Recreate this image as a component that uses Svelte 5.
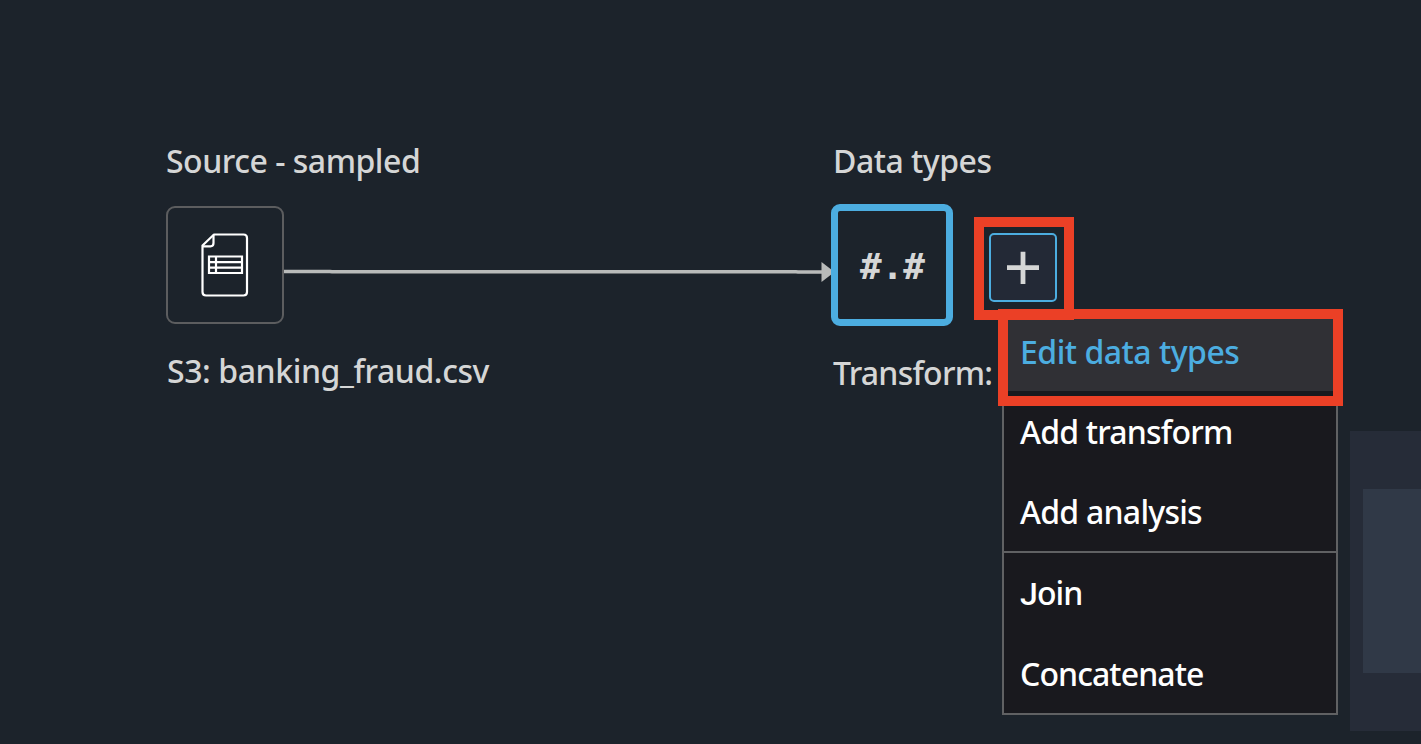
<script>
  const groups = [
    [
      { label: 'Edit data types', active: true, spacing: -0.5 },
      { label: 'Add transform', spacing: -0.8 },
      { label: 'Add analysis', spacing: -0.75 }
    ],
    [
      { label: 'Join', spacing: -0.9, flatJ: true },
      { label: 'Concatenate', spacing: -0.92 }
    ]
  ];
</script>

<main class="canvas">
  <aside class="minimap"><div class="viewport"></div></aside>

  <svg class="edge" width="560" height="30" viewBox="0 0 560 30" aria-hidden="true">
    <path d="M4 15.5H50L52 15.8H516L518 16H545" fill="none" stroke="#b9bbba" stroke-width="3.6" />
    <path d="M541.500 6L554.500 16L541.500 26Z" fill="#b9bbba" />
  </svg>

  <section class="node source">
    <h2><span class="t1">Source - sampled</span></h2>
    <div class="tile">
      <svg width="50" height="66" viewBox="0 0 50 66" fill="none" stroke="#fff" stroke-width="2.2" stroke-linejoin="round">
        <path d="M13 2.500H42.500Q46 2.500 46 6V60Q46 63.500 42.500 63.500H5Q1.500 63.500 1.500 60V13.500Z" />
        <path d="M12.500 2.800V11Q12.500 14.300 9.500 14.300H1.800" />
        <path d="M8 24.500H41V41H8ZM8 30.200H41M8 35.700H41M15 24.500V41" stroke-linejoin="miter" />
      </svg>
    </div>
    <p><span class="t2">S3: banking_fraud.csv</span></p>
  </section>

  <section class="node types">
    <h2><span class="t3">Data types</span></h2>
    <div class="tile selected"><span class="code">#.#</span></div>
    <p><span class="t4">Transform:</span></p>
  </section>

  <button class="add" aria-label="+">
    <svg width="34" height="34" viewBox="0 0 34 34"><path d="M17 0.700V33M1 16.700H33" stroke="#d5d6d6" stroke-width="4.800" /></svg>
  </button>

  <nav class="menu">
    {#each groups as group}
      <div class="group">
        {#each group as item}
          <div class="item" class:active={item.active}>
            <span class="label" class:flat-j={item.flatJ} style="letter-spacing: {item.spacing}px">{item.label}</span>
          </div>
        {/each}
      </div>
    {/each}
  </nav>

  <div class="mark mark-add"></div>
  <div class="mark mark-edit"></div>
</main>

<style>
  :global(body) { margin: 0; background: #1c232b; }
  .canvas {
    position: relative;
    width: 1421px;
    height: 744px;
    overflow: hidden;
    background: #1c232b;
    color: #d5d6d6;
    font: 500 32px/40px "Noto Sans", "Open Sans", sans-serif;
    white-space: nowrap;
  }
  .minimap {
    position: absolute;
    left: 1350px;
    top: 431px;
    width: 71px;
    height: 300px;
    box-sizing: border-box;
    padding: 58px 0 58px 12.5px;
    background: #262c38;
  }
  .viewport { height: 184px; background: #303947; }
  .edge { position: absolute; left: 280px; top: 256px; }
  .node { position: absolute; display: flex; flex-direction: column; align-items: flex-start; }
  .source { left: 166px; top: 142px; }
  .types { left: 831px; top: 142px; }
  h2, p { margin: 0; font: inherit; }
  h2 { height: 40px; margin-top: -1px; margin-bottom: 1px; }
  p { margin-top: -1px; }
  .types h2, .types p { padding-left: 2px; }
  .t1 { letter-spacing: -0.48px; }
  .t2 { letter-spacing: -0.42px; padding-left: 1px; }
  .t3 { letter-spacing: -0.5px; }
  .t4 { letter-spacing: -0.75px; }
  .tile {
    box-sizing: border-box;
    width: 118px;
    height: 118px;
    margin: 24px 0 28px;
    border: 2px solid #5c5d5f;
    border-radius: 9px;
    display: flex;
    align-items: center;
    justify-content: center;
    background: #1c232b;
  }
  .tile svg { margin-left: 2px; }
  .selected {
    width: 122px;
    height: 122px;
    margin: 22px 0 28px;
    border: 7px solid #4cade0;
    border-radius: 9px;
  }
  .code { font: 700 36px/40px "DejaVu Sans Mono", monospace; padding: 4px 0 0 1px; }
  .add {
    position: absolute;
    left: 989px;
    top: 233px;
    box-sizing: border-box;
    width: 68px;
    height: 69px;
    padding: 0;
    border: 2px solid #4cade0;
    border-radius: 5px;
    background: #232936;
    display: flex;
    align-items: center;
    justify-content: center;
  }
  .menu {
    position: absolute;
    left: 1002px;
    top: 309px;
    box-sizing: border-box;
    width: 336px;
    border: 2px solid #606163;
    background: #19191e;
    color: #fff;
  }
  .group + .group { border-top: 2px solid #606163; }
  .item { height: 80px; box-sizing: border-box; padding: 1px 0 0 16px; display: flex; align-items: center; }
  .active { background: #303035; color: #4cade0; }
  .label { display: inline-block; }
  .flat-j::first-letter { font-family: Roboto, "Liberation Sans", sans-serif; }
  .mark { position: absolute; box-sizing: border-box; border: 10px solid #eb4026; }
  .mark-add { left: 974px; top: 217px; width: 100px; height: 103px; }
  .mark-edit { left: 998px; top: 309px; width: 345px; height: 97px; }
</style>
